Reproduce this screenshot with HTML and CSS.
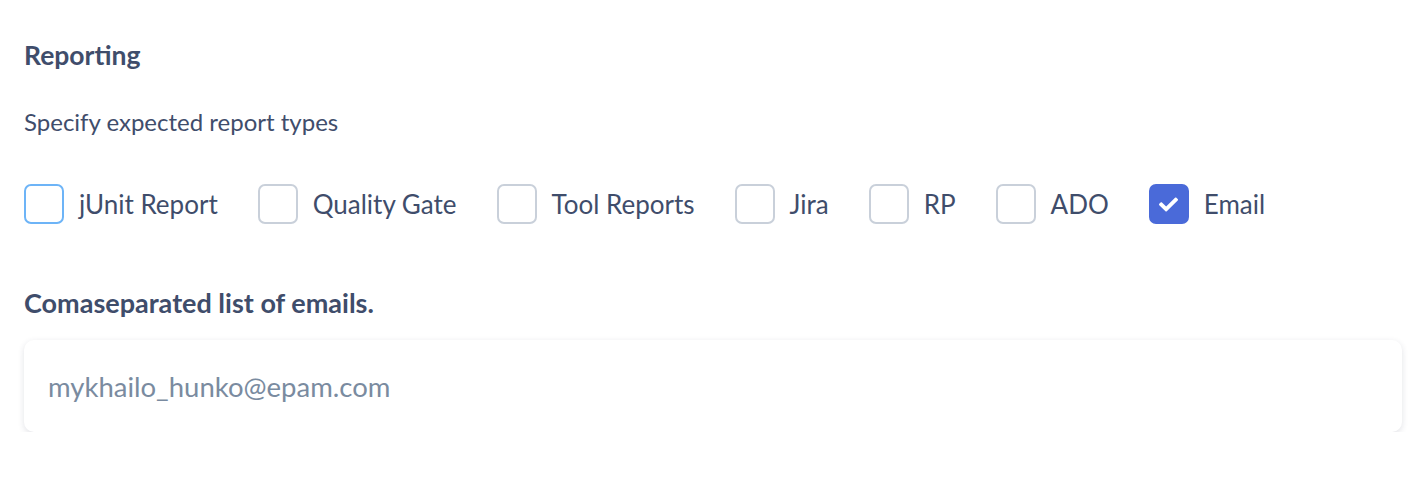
FILE: index.html
```html
<!DOCTYPE html>
<html>
<head>
<meta charset="utf-8">
<link rel="stylesheet" href="styles.css">
</head>
<body>
<section class="reporting">
  <h2 class="title">Reporting</h2>
  <p class="hint">Specify expected report types</p>
  <div class="options">
    <label class="option"><span class="box focused"></span><span class="text">jUnit Report</span></label>
    <label class="option"><span class="box"></span><span class="text">Quality Gate</span></label>
    <label class="option"><span class="box"></span><span class="text">Tool Reports</span></label>
    <label class="option"><span class="box"></span><span class="text">Jira</span></label>
    <label class="option"><span class="box"></span><span class="text">RP</span></label>
    <label class="option"><span class="box"></span><span class="text">ADO</span></label>
    <label class="option"><span class="box checked"><svg class="check" viewBox="0 0 512 512" width="19" height="19"><path fill="#fff" d="M173.898 439.404l-166.4-166.4c-9.997-9.997-9.997-26.206 0-36.204l36.203-36.204c9.997-9.998 26.207-9.998 36.204 0L192 312.69 432.095 72.596c9.997-9.997 26.207-9.997 36.204 0l36.203 36.204c9.997 9.997 9.997 26.206 0 36.204l-294.4 294.401c-9.998 9.997-26.207 9.997-36.204-.001z"/></svg></span><span class="text">Email</span></label>
  </div>
  <h3 class="field-label">Comaseparated list of emails.</h3>
  <div class="input">mykhailo_hunko@epam.com</div>
</section>
</body>
</html>
```
FILE: styles.css
```css
html, body {
  margin: 0;
  padding: 0;
  background: #ffffff;
}
body {
  font-family: "Lato", "Noto Sans", sans-serif;
  color: #3f4d6b;
}
.reporting {
  padding: 37px 26px 0 24px;
}
.title {
  margin: 0;
  font-size: 26.5px;
  font-weight: 700;
  line-height: 36px;
}
.hint {
  margin: 34px 0 0;
  font-size: 24px;
  line-height: 30px;
}
.options {
  display: flex;
  align-items: center;
  gap: 40px;
  margin-top: 47px;
}
.option {
  display: flex;
  align-items: center;
  gap: 15px;
  font-size: 26px;
  line-height: 40px;
}
.box {
  box-sizing: border-box;
  width: 40px;
  height: 40px;
  flex: none;
  border: 2px solid #c9d0da;
  border-radius: 7px;
  display: flex;
  align-items: center;
  justify-content: center;
}
.box.focused {
  border-color: #6db4f7;
}
.box.checked {
  background: #4a6ad9;
  border-color: #4a6ad9;
}
.field-label {
  margin: 61px 0 0;
  font-size: 27px;
  font-weight: 700;
  line-height: 36px;
}
.input {
  margin-top: 19px;
  height: 92px;
  box-sizing: border-box;
  padding: 0 24px;
  display: flex;
  align-items: center;
  border-radius: 10px;
  background: #fff;
  box-shadow: 0 2px 6px rgba(40, 50, 80, 0.14);
  font-size: 27.5px;
  color: #7a8ba0;
}
```
